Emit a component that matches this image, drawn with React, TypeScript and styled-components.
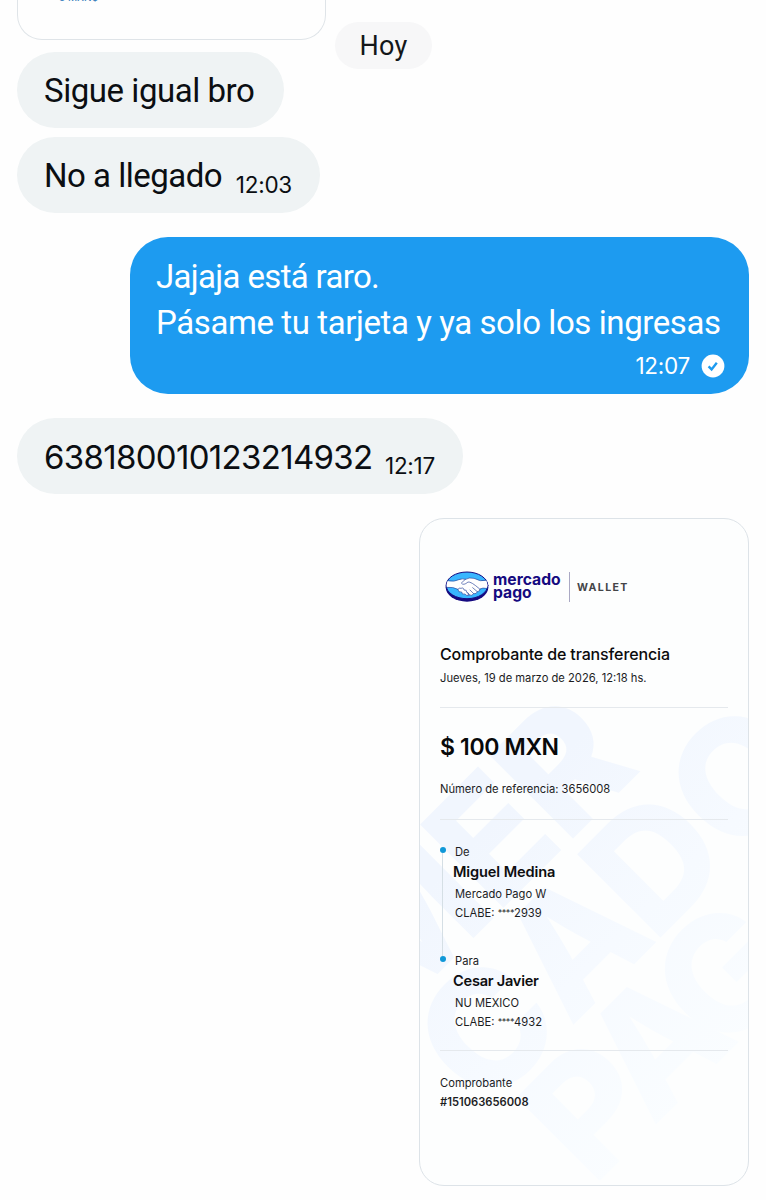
import React from 'react';
import styled, { createGlobalStyle } from 'styled-components';

const GlobalStyle = createGlobalStyle`
  * { box-sizing: border-box; }
  body { margin: 0; background: #fefefe; overflow: hidden; }
`;

const Chat = styled.main`
  position: relative;
  display: flex;
  flex-direction: column;
  align-items: flex-start;
  width: 766px;
  height: 1200px;
  padding: 0 17px;
  overflow: hidden;
  background: #fefefe;
  color: #0b0e12;
  font-family: Roboto, "Liberation Sans", sans-serif;
`;

const PreviousCard = styled.div`
  width: 309px;
  height: 52px;
  margin-top: -12px;
  padding-left: 41px;
  border: 1px solid #dfe4e8;
  border-top: 0;
  border-radius: 0 0 25px 25px;
  color: #3f83bd;
  font: 500 10px/18px Inter, sans-serif;
`;

const DatePill = styled.time`
  position: absolute;
  top: 22px;
  left: 335px;
  width: 97px;
  height: 47px;
  border-radius: 24px;
  background: #f7f7f8;
  color: #14171a;
  font-size: 27px;
  line-height: 49px;
  letter-spacing: 0.2px;
  text-align: center;
`;

const Bubble = styled.div<{ $width: number; $gap: number }>`
  display: flex;
  width: ${(p) => p.$width}px;
  height: 76px;
  margin-top: ${(p) => p.$gap}px;
  padding: 16px 28px 14px 27px;
  border-radius: 38px;
  background: #eff3f4;
`;

const SentBubble = styled.div`
  display: flex;
  flex-direction: column;
  align-self: flex-end;
  width: 619px;
  height: 157px;
  margin-top: 24px;
  padding: 17px 24px 0 26px;
  border-radius: 38px;
  background: #1d9bf0;
  color: #fff;
`;

const Message = styled.span<{ $spacing: number }>`
  font-size: 33px;
  line-height: 46px;
  letter-spacing: ${(p) => p.$spacing}px;
  white-space: nowrap;
`;

const NumberMessage = styled(Message)`
  font-family: Inter, sans-serif;
`;

const Stamp = styled.time`
  margin: 17px 0 0 auto;
  font: 400 22.5px/30px Inter, sans-serif;
  letter-spacing: -0.25px;
`;

const SentMeta = styled.div`
  display: flex;
  align-items: center;
  justify-content: flex-end;
  gap: 11px;
  height: 39px;
  ${Stamp} { margin: 0; }
`;

const Receipt = styled.article`
  position: relative;
  align-self: flex-end;
  width: 330px;
  height: 668px;
  margin-top: 24px;
  padding: 52px 20px 0;
  overflow: hidden;
  border: 1px solid #dde3e8;
  border-radius: 25px;
  background: #fdfefe;
  color: #1c1d1f;
  font-family: Inter, sans-serif;
`;

const Watermark = styled.svg`
  position: absolute;
  top: -1px;
  left: -1px;
`;

const Content = styled.div`
  position: relative;
`;

const Brand = styled.header`
  display: flex;
  align-items: center;
  height: 32px;
  padding-left: 5px;
`;

const BrandName = styled.strong`
  width: 76px;
  margin: 0 0 0 4px;
  color: #150a80;
  font-size: 15.7px;
  font-weight: 700;
  line-height: 12.6px;
`;

const BrandSuffix = styled.span`
  height: 30px;
  padding-left: 7px;
  border-left: 1px solid #aaa9c4;
  color: #444548;
  font-size: 10.6px;
  font-weight: 700;
  line-height: 31px;
  letter-spacing: 1.35px;
`;

const Title = styled.h1`
  margin: 39px 0 2px;
  color: #0b0b0c;
  font-size: 16px;
  font-weight: 500;
  line-height: 24px;
  letter-spacing: -0.13px;
  white-space: nowrap;
`;

const Line = styled.div<{ $height?: number; $bold?: boolean }>`
  height: ${(p) => p.$height ?? 19}px;
  font-size: 11.2px;
  font-weight: ${(p) => (p.$bold ? 600 : 400)};
  line-height: 20px;
  white-space: nowrap;
`;

const Amount = styled.div`
  margin: 24px 0 16px;
  color: #08090a;
  font-size: 23px;
  font-weight: 600;
  line-height: 31px;
  letter-spacing: -0.35px;
`;

const Rule = styled.hr<{ $gap: number }>`
  height: 1px;
  margin: ${(p) => p.$gap}px 0 0;
  border: 0;
  background: #e5e9ed;
`;

const Parties = styled.div`
  margin-top: 21px;
`;

const Party = styled.section<{ $height: number }>`
  display: grid;
  grid-template-columns: 15px 1fr;
  height: ${(p) => p.$height}px;
`;

const Rail = styled.div<{ $line?: boolean }>`
  display: flex;
  flex-direction: column;
  padding-top: 6px;
  &::before {
    content: "";
    flex: none;
    width: 6px;
    height: 6px;
    margin-left: -0.5px;
    border-radius: 50%;
    background: #1098d8;
  }
  &::after {
    content: "";
    flex: 1;
    width: 1px;
    margin: 0 0 -6px 2px;
    background: ${(p) => (p.$line ? '#d5dfe5' : 'transparent')};
  }
`;

const PartyText = styled.div`
  padding-top: 1px;
`;

const Name = styled.h2<{ $spacing: number }>`
  margin: 1px 0 1px -2px;
  color: #0d0e10;
  font-size: 14.6px;
  font-weight: 600;
  line-height: 21px;
  letter-spacing: ${(p) => p.$spacing}px;
`;

const Stars = styled.span`
  font-size: 9px;
  letter-spacing: -0.4px;
  vertical-align: 1px;
`;

const Voucher = styled.footer`
  margin-top: 22px;
`;

const SentCheck = () => (
  <svg width="24" height="24" viewBox="0 0 24 24" fill="none">
    <circle cx="12" cy="12" r="11.4" fill="#fff" />
    <path d="m7.6 12.4 3 3 5.2-6.6" stroke="#1d9bf0" strokeWidth="2.4" />
  </svg>
);

const Handshake = () => (
  <svg width="44" height="31.4" viewBox="15 18 132 94" fill="none" strokeLinecap="round" strokeLinejoin="round">
    <ellipse cx="81" cy="67" rx="64" ry="43" fill="#150a80" />
    <ellipse cx="81" cy="61" rx="62.5" ry="40" fill="#38b6ff" stroke="#150a80" strokeWidth="3" />
    <path
      d="M23 47Q42 52 60 43Q68 40 76 43Q88 36 102 40Q121 51 139 46L143 61Q142 68 139 70Q128 67 120 72Q120 80 112 80Q110 88 101 86Q96 94 88 90Q80 96 75 87Q65 90 65 81Q54 83 54 73Q40 65 20 67L20 57Z"
      fill="#fff"
    />
    <path
      d="M60 43Q68 40 76 43L64 54Q70 63 84 51Q93 49 118 71M120 72Q120 80 112 80L98 68M112 80Q110 88 101 86L90 75M101 86Q96 94 88 90L83 83M54 73Q57 66 63 70Q71 66 72 75Q81 73 80 82Q88 83 85 90M76 43Q88 36 102 40Q121 51 139 46M23 47Q42 52 60 43M20 67Q40 65 54 73Q54 83 65 81Q65 90 75 87Q80 96 88 90M120 72Q128 67 139 70"
      stroke="#28449a"
      strokeWidth="2"
    />
  </svg>
);

const WATERMARK_ROWS = [
  { y: 998, letters: [['M', -444], ['E', -295], ['R', -197]] },
  { y: 1130, letters: [['C', -444], ['A', -323], ['D', -205], ['O', -89]] },
  { y: 1259, letters: [['P', -420], ['A', -335], ['G', -238], ['O', -117]] },
] as const;

const BrandWatermark = () => (
  <Watermark width="330" height="668" viewBox="419 518 330 668" aria-hidden="true">
    <defs>
      <linearGradient id="fade" gradientUnits="userSpaceOnUse" x1="0" y1="930" x2="0" y2="1270">
        <stop offset="0" stopColor="#f1f6fe" />
        <stop offset="0.5" stopColor="#f6faff" />
        <stop offset="1" stopColor="#fafdff" />
      </linearGradient>
    </defs>
    <g transform="rotate(-45)" fill="url(#fade)" fontFamily="Inter, sans-serif" fontSize="162" fontWeight="800">
      {WATERMARK_ROWS.map((row) =>
        row.letters.map(([letter, x]) => (
          <text key={`${row.y}${x}`} x={x} y={row.y}>
            {letter}
          </text>
        )),
      )}
    </g>
  </Watermark>
);

type PartyInfo = { role: string; name: string; bank: string; digits: string; height: number; spacing: number };

const PARTIES: PartyInfo[] = [
  { role: 'De', name: 'Miguel Medina', bank: 'Mercado Pago W', digits: '2939', height: 109, spacing: -0.12 },
  { role: 'Para', name: 'Cesar Javier', bank: 'NU MEXICO', digits: '4932', height: 100, spacing: -0.25 },
];

export default function App() {
  return (
    <>
      <GlobalStyle />
      <Chat>
        <PreviousCard>3 MXN$</PreviousCard>
        <DatePill>Hoy</DatePill>
        <Bubble $width={267} $gap={12}>
          <Message $spacing={-0.45}>Sigue igual bro</Message>
        </Bubble>
        <Bubble $width={303} $gap={9}>
          <Message $spacing={-0.5}>No a llegado</Message>
          <Stamp>12:03</Stamp>
        </Bubble>
        <SentBubble>
          <Message $spacing={-0.66}>Jajaja está raro.</Message>
          <Message $spacing={-0.41}>Pásame tu tarjeta y ya solo los ingresas</Message>
          <SentMeta>
            <Stamp>12:07</Stamp>
            <SentCheck />
          </SentMeta>
        </SentBubble>
        <Bubble $width={446} $gap={24}>
          <NumberMessage $spacing={-0.68}>638180010123214932</NumberMessage>
          <Stamp>12:17</Stamp>
        </Bubble>
        <Receipt>
          <BrandWatermark />
          <Content>
            <Brand>
              <Handshake />
              <BrandName>
                mercado
                <br />
                pago
              </BrandName>
              <BrandSuffix>WALLET</BrandSuffix>
            </Brand>
            <Title>Comprobante de transferencia</Title>
            <Line>Jueves, 19 de marzo de 2026, 12:18 hs.</Line>
            <Rule $gap={20} />
            <Amount>$ 100 MXN</Amount>
            <Line>Número de referencia: 3656008</Line>
            <Rule $gap={21} />
            <Parties>
              {PARTIES.map((party, index) => (
                <Party key={party.role} $height={party.height}>
                  <Rail $line={index === 0} />
                  <PartyText>
                    <Line>{party.role}</Line>
                    <Name $spacing={party.spacing}>{party.name}</Name>
                    <Line>{party.bank}</Line>
                    <Line>
                      CLABE: <Stars>****</Stars>
                      {party.digits}
                    </Line>
                  </PartyText>
                </Party>
              ))}
            </Parties>
            <Rule $gap={0} />
            <Voucher>
              <Line>Comprobante</Line>
              <Line $bold>#151063656008</Line>
            </Voucher>
          </Content>
        </Receipt>
      </Chat>
    </>
  );
}
